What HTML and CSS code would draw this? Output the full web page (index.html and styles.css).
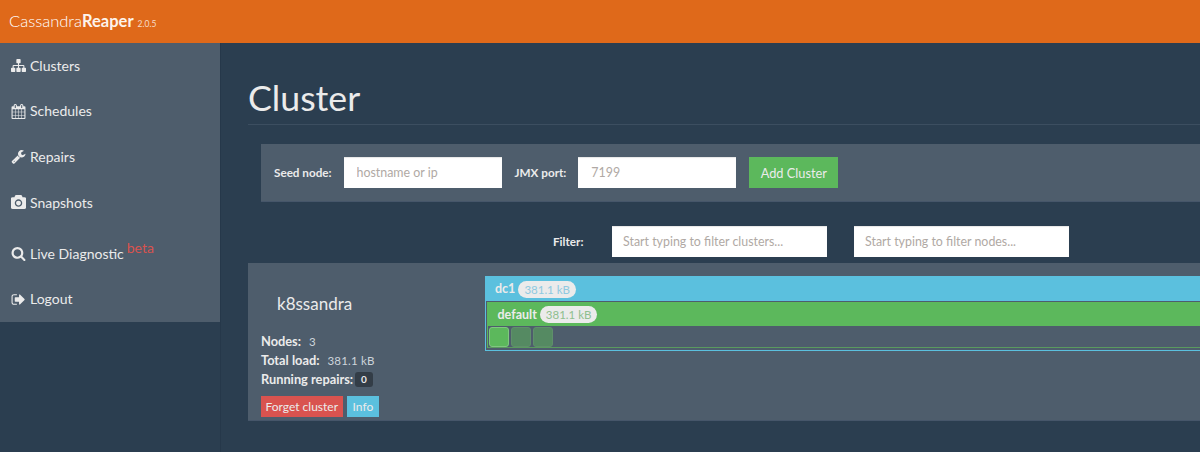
FILE: index.html
```html
<!DOCTYPE html>
<html lang="en">
<head>
<meta charset="utf-8">
<title>Cassandra Reaper</title>
<link rel="stylesheet" href="styles.css">
</head>
<body>
<header class="navbar">
  <span class="brand">Cassandra<b>Reaper</b></span><span class="version">2.0.5</span>
</header>
<div class="shell">
  <nav class="sidebar">
    <ul class="menu">
      <li class="menu-item"><svg class="icon" viewBox="0 0 1792 1792"><path d="M1792 1248v320q0 40-28 68t-68 28h-320q-40 0-68-28t-28-68v-320q0-40 28-68t68-28h96v-192h-512v192h96q40 0 68 28t28 68v320q0 40-28 68t-68 28h-320q-40 0-68-28t-28-68v-320q0-40 28-68t68-28h96v-192h-512v192h96q40 0 68 28t28 68v320q0 40-28 68t-68 28h-320q-40 0-68-28t-28-68v-320q0-40 28-68t68-28h96v-192q0-52 38-90t90-38h512v-192h-96q-40 0-68-28t-28-68v-320q0-40 28-68t68-28h320q40 0 68 28t28 68v320q0 40-28 68t-68 28h-96v192h512q52 0 90 38t38 90v192h96q40 0 68 28t28 68z"/></svg>Clusters</li>
      <li class="menu-item"><svg class="icon" viewBox="0 0 1792 1792"><path d="M192 1664h288v-288h-288v288zm352 0h320v-288h-320v288zm-352-352h288v-320h-288v320zm352 0h320v-320h-320v320zm-352-384h288v-288h-288v288zm736 736h320v-288h-320v288zm-384-736h320v-288h-320v288zm768 736h288v-288h-288v288zm-384-352h320v-320h-320v320zm-352-864v-288q0-13-9.5-22.5t-22.5-9.5h-64q-13 0-22.5 9.5t-9.5 22.5v288q0 13 9.5 22.5t22.5 9.5h64q13 0 22.5-9.5t9.5-22.5zm736 864h288v-320h-288v320zm-384-384h320v-288h-320v288zm384 0h288v-288h-288v288zm32-480v-288q0-13-9.5-22.5t-22.5-9.5h-64q-13 0-22.5 9.5t-9.5 22.5v288q0 13 9.5 22.5t22.5 9.5h64q13 0 22.5-9.5t9.5-22.5zm384-64v1280q0 52-38 90t-90 38h-1408q-52 0-90-38t-38-90v-1280q0-52 38-90t90-38h128v-96q0-66 47-113t113-47h64q66 0 113 47t47 113v96h384v-96q0-66 47-113t113-47h64q66 0 113 47t47 113v96h128q52 0 90 38t38 90z"/></svg>Schedules</li>
      <li class="menu-item"><svg class="icon" viewBox="0 0 1792 1792"><path d="M448 1472q0-26-19-45t-45-19-45 19-19 45 19 45 45 19 45-19 19-45zm644-420l-682 682q-37 37-90 37-52 0-91-37l-106-108q-38-36-38-90 0-53 38-91l681-681q39 98 114.5 173.5t173.5 114.5zm634-435q0 39-23 106-47 134-164.5 217.5t-258.5 83.5q-185 0-316.5-131.5t-131.5-316.5 131.5-316.5 316.5-131.5q58 0 121.5 16.5t107.5 46.5q16 11 16 28t-16 28l-293 169v224l193 107q5-3 79-48.5t135.5-81 70.5-35.5q15 0 23.5 10t8.5 25z"/></svg>Repairs</li>
      <li class="menu-item"><svg class="icon" viewBox="0 0 1792 1792"><path d="M896 672q119 0 203.5 84.5t84.5 203.5-84.5 203.5-203.5 84.5-203.5-84.5-84.5-203.5 84.5-203.5 203.5-84.5zm704-416q106 0 181 75t75 181v896q0 106-75 181t-181 75h-1408q-106 0-181-75t-75-181v-896q0-106 75-181t181-75h224l51-136q19-49 69.5-84.5t103.5-35.5h512q53 0 103.5 35.5t69.5 84.5l51 136h224zm-704 1152q185 0 316.5-131.5t131.5-316.5-131.5-316.5-316.5-131.5-316.5 131.5-131.5 316.5 131.5 316.5 316.5 131.5z"/></svg>Snapshots</li>
      <li class="menu-item menu-item-tall"><svg class="icon" viewBox="0 0 1792 1792"><path d="M1216 832q0-185-131.5-316.5t-316.5-131.5-316.5 131.5-131.5 316.5 131.5 316.5 316.5 131.5 316.5-131.5 131.5-316.5zm512 832q0 52-38 90t-90 38q-54 0-90-38l-343-342q-179 124-399 124-143 0-273.5-55.5t-225-150-150-225-55.5-273.5 55.5-273.5 150-225 225-150 273.5-55.5 273.5 55.5 225 150 150 225 55.5 273.5q0 220-124 399l343 343q37 37 37 90z"/></svg>Live Diagnostic <span class="beta">beta</span></li>
      <li class="menu-item"><svg class="icon" viewBox="0 0 1792 1792"><path d="M704 1440q0 4 1 20t.5 26.5-3 23.5-10 19.5-20.5 6.5h-320q-119 0-203.5-84.5t-84.5-203.5v-704q0-119 84.5-203.5t203.5-84.5h320q13 0 22.5 9.5t9.5 22.5q0 4 1 20t.5 26.5-3 23.5-10 19.5-20.5 6.5h-320q-66 0-113 47t-47 113v704q0 66 47 113t113 47h312l11.5 1 11.5 3 8 5.5 7 9 2 13.5zm928-544q0 26-19 45l-544 544q-19 19-45 19t-45-19-19-45v-288h-448q-26 0-45-19t-19-45v-384q0-26 19-45t45-19h448v-288q0-26 19-45t45-19 45 19l544 544q19 19 19 45z"/></svg>Logout</li>
    </ul>
  </nav>
  <main class="content">
    <h1 class="title">Cluster</h1>
    <form class="seed-form">
      <label class="field-label">Seed node:</label>
      <input class="text-input seed-input" placeholder="hostname or ip">
      <label class="field-label">JMX port:</label>
      <input class="text-input seed-input" placeholder="7199">
      <button class="btn btn-add" type="button">Add Cluster</button>
    </form>
    <div class="filters">
      <label class="field-label filter-label">Filter:</label>
      <input class="text-input filter-input" placeholder="Start typing to filter clusters...">
      <input class="text-input filter-input" placeholder="Start typing to filter nodes...">
    </div>
    <section class="cluster">
      <div class="cluster-info">
        <h2 class="cluster-name">k8ssandra</h2>
        <div class="stat"><b>Nodes:</b><span class="stat-value">3</span></div>
        <div class="stat"><b>Total load:</b><span class="stat-value">381.1 kB</span></div>
        <div class="stat"><b>Running repairs:</b><span class="count">0</span></div>
        <div class="actions">
          <button class="tag tag-red" type="button">Forget cluster</button>
          <button class="tag tag-blue" type="button">Info</button>
        </div>
      </div>
      <div class="topology">
        <div class="dc">
          <div class="dc-head"><b>dc1</b><span class="pill pill-blue">381.1 kB</span></div>
          <div class="rack">
            <div class="rack-head"><b>default</b><span class="pill pill-green">381.1 kB</span></div>
            <div class="nodes">
              <span class="node node-on"></span>
              <span class="node"></span>
              <span class="node"></span>
            </div>
          </div>
        </div>
      </div>
    </section>
  </main>
</div>
</body>
</html>
```
FILE: styles.css
```css
* { box-sizing: border-box; }
html, body { margin: 0; height: 452px; overflow: hidden; }
body {
  background: #2b3e50;
  color: #ebebeb;
  font-family: Lato, "Liberation Sans", sans-serif;
  font-size: 14px;
  line-height: 1.43;
}
.navbar {
  height: 43px;
  background: #df691a;
  padding-left: 9px;
  display: flex;
  align-items: baseline;
  line-height: 43px;
}
.brand { font-size: 16.5px; font-weight: 300; color: #fff; }
.brand b { font-weight: 700; color: #fdf3ec; }
.version { font-size: 8.5px; margin-left: 4px; color: #f6dcc9; }
.shell { display: flex; height: 409px; }
.sidebar {
  width: 221px;
  flex: none;
  border-right: 1px solid #26384a;
}
.menu { list-style: none; margin: 0; padding: 0; background: #4e5d6c; }
.menu-item {
  height: 45.6px;
  padding-left: 11px;
  display: flex;
  align-items: center;
  font-size: 14px;
}
.menu-item-tall { height: 51px; padding-top: 6px; }
.icon { width: 15px; height: 15px; fill: #ebebeb; margin-right: 4px; flex: none; }
.beta {
  color: #d9534f;
  font-size: 14px;
  margin: -11px 0 0 3px;
}
.content { flex: none; width: 1100px; padding: 0 27px; }
.title {
  font-size: 35.7px;
  font-weight: 400;
  line-height: 40px;
  margin: 35px 0 0;
  padding-bottom: 6px;
  border-bottom: 1px solid #3c4e60;
  color: #ebebeb;
}
.seed-form {
  margin: 19px 0 0 13px;
  height: 58px;
  background: #4e5d6c;
  border-bottom: 1px solid #46566a;
  padding-left: 13px;
  display: flex;
  align-items: center;
}
.field-label { font-size: 11.7px; font-weight: 700; }
.text-input {
  height: 31px;
  background: #fff;
  border: 0;
  box-shadow: inset 0 1px 1px rgba(0, 0, 0, .1);
  color: #333;
  font-family: inherit;
  font-size: 12.4px;
  border-radius: 0;
  padding: 0 13px;
  outline: 0;
}
.text-input::placeholder { color: #b0a9a4; opacity: 1; }
.seed-input { width: 158px; }
.seed-input:first-of-type { margin: 0 13px 0 12px; }
.seed-input + .field-label + .seed-input { margin: 0 13px 0 12px; }
.btn-add {
  height: 31px;
  width: 89px;
  background: #5cb85c;
  border: 0;
  color: #ebebeb;
  font: 12.8px Lato, "Liberation Sans", sans-serif;
  padding: 0;
}
.filters {
  margin-top: 24px;
  height: 31px;
  padding-left: 305px;
  display: flex;
  align-items: center;
}
.filter-label { width: 59px; }
.filter-input { width: 215px; margin-right: 27px; padding: 0 11px; }
.cluster {
  margin-top: 6px;
  height: 158px;
  background: #4e5d6c;
  border-bottom: 1px solid #46566a;
  display: flex;
}
.cluster-info { width: 237px; flex: none; padding-left: 13px; }
.cluster-name {
  font-size: 17px;
  font-weight: 400;
  line-height: 20px;
  margin: 31px 0 18px 16px;
}
.stat { font-size: 12.8px; line-height: 19px; height: 19px; display: flex; align-items: center; color: #ebebeb; }
.stat-value { font-size: 11.5px; font-weight: 400; letter-spacing: .2px; margin-left: 8px; color: #cdd4db; }
.count {
  background: #333d47;
  border-radius: 3px;
  font-size: 10px;
  font-weight: 700;
  line-height: 15px;
  padding: 0 6px;
  margin-left: 2px;
}
.actions { display: flex; gap: 4px; margin-top: 7px; }
.tag {
  height: 21px;
  border: 0;
  padding: 0 4.5px;
  color: #ebebeb;
  font: 12px Lato, "Liberation Sans", sans-serif;
}
.tag-red { background: #d9534f; }
.tag-blue { background: #5bc0de; padding: 0 6px; }
.topology { flex: 1; padding-top: 13px; }
.dc { border: 1px solid #5bc0de; height: 75px; }
.dc-head {
  height: 24px;
  background: #5bc0de;
  padding-left: 9px;
  display: flex;
  align-items: center;
  font-size: 12.5px;
}
.rack { border: 1px solid #5cb85c; border-bottom-color: #5a9a5f; margin: 1px 0 0 1px; height: 46px; }
.rack-head {
  height: 23px;
  background: #5cb85c;
  padding-left: 9.5px;
  display: flex;
  align-items: center;
  font-size: 12.5px;
}
.pill {
  background: #ebebeb;
  border-radius: 10px;
  font-size: 11.5px;
  line-height: 17px;
  padding: 0 6px;
  margin-left: 3px;
}
.pill-blue { color: #8fc9e0; }
.pill-green { color: #8fbf8f; }
.nodes { display: flex; gap: 2px; padding: 1px 0 0 1px; }
.node {
  width: 20px;
  height: 20px;
  border-radius: 3px;
  background: #558a62;
  border: 1px solid #5f8f6b;
}
.node-on { background: #5cb85c; border-color: #80c780; }
```
